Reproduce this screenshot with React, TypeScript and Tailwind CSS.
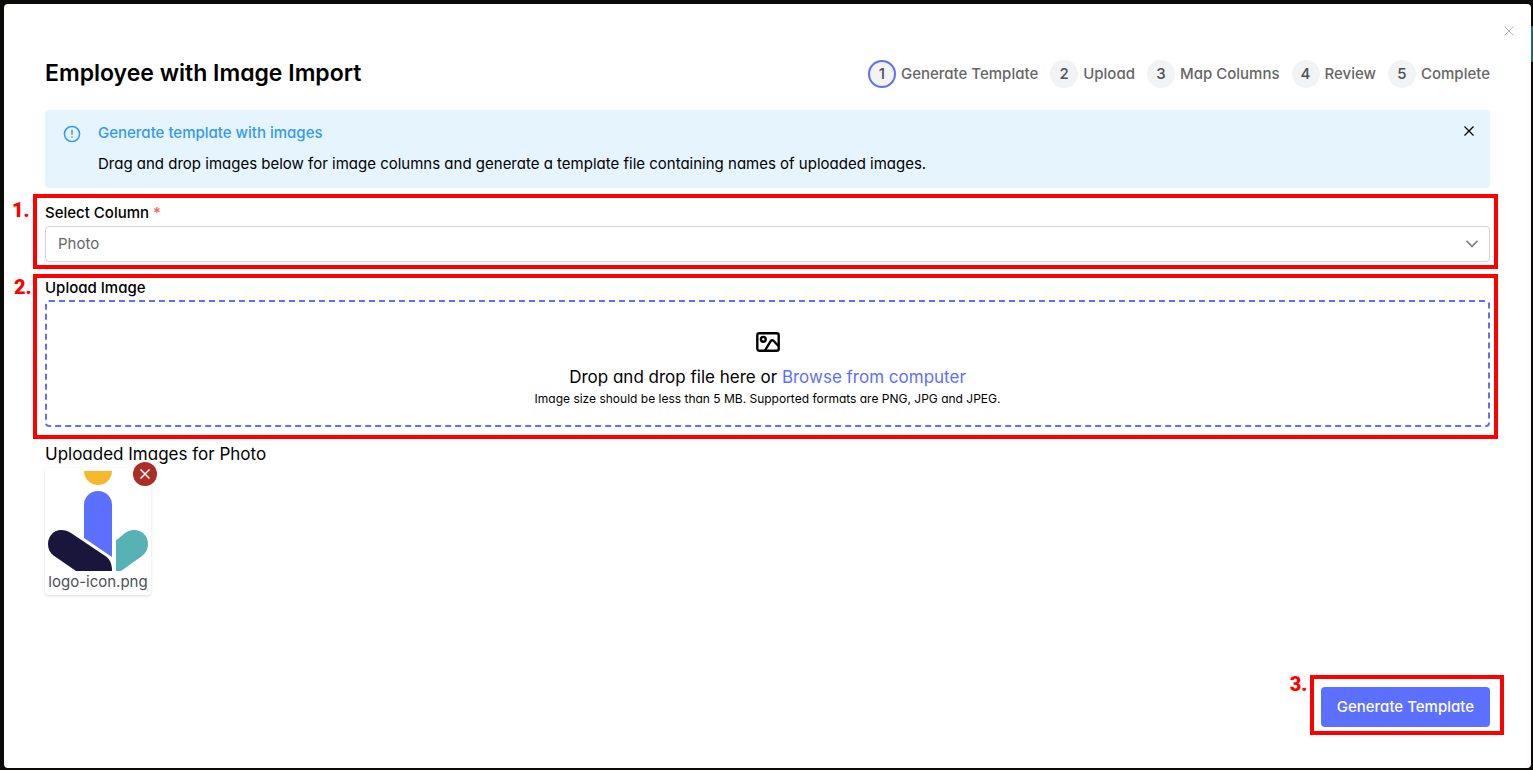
import { useState } from "react";

const steps = ["Generate Template", "Upload", "Map Columns", "Review", "Complete"];

function CrossIcon({ className }: { className: string }) {
  return (
    <svg viewBox="0 0 10 10" className={className} fill="none" stroke="currentColor" aria-hidden="true">
      <path d="M0.5 0.5 9.5 9.5M9.5 0.5 0.5 9.5" />
    </svg>
  );
}

function Stepper() {
  return (
    <ol className="flex items-center gap-3">
      {steps.map((label, i) => (
        <li key={label} className="flex items-center gap-[5px] text-[15px] font-medium text-[#666]">
          <span
            className={
              i === 0
                ? "flex size-7 items-center justify-center rounded-full border-2 border-[#5c6fff] bg-[#f1f3f5] text-[#495057]"
                : "flex size-7 items-center justify-center rounded-full bg-[#f1f3f5] text-[#495057]"
            }
          >
            {i + 1}
          </span>
          {label}
        </li>
      ))}
    </ol>
  );
}

function Marker({ children, className }: { children: string; className: string }) {
  return (
    <span
      className={`absolute font-['Roboto',sans-serif] text-[20px] leading-6 font-black text-[#f00] ${className}`}
    >
      {children}
    </span>
  );
}

function LogoPicture() {
  return (
    <svg viewBox="0 0 100 100" className="size-[100px]" role="img" aria-label="logo-icon.png">
      <path d="M36 0H64A14 14 0 0 1 36 0Z" fill="#f8b82e" />
      <path d="M36 34A14 14 0 0 1 64 34V86L36 67Z" fill="#5b70ff" />
      <path d="M13 59C17 59 20 60 23 62L58 85.500C62 88.500 64 93 64 100H28L5.500 84.500C2 82 0 78 0 73C0 65 6 59 13 59Z" fill="#19153b" />
      <path d="M68 69.500L77 62C80 60 83 59 86 59C94 59 100 65 100 73C100 78 98 82 94 85L73 100H68Z" fill="#56b2b5" />
    </svg>
  );
}

export default function App() {
  const [column, setColumn] = useState("Photo");
  return (
    <div className="relative flex min-h-screen flex-col bg-[#0b0a08] pt-1 pr-0.5 pb-0.5 pl-1 font-['Inter',sans-serif] text-black [font-feature-settings:'cv11']">
      <span className="absolute top-[26px] right-0 h-9 w-0.5 bg-[#256568]" />
      <main className="flex grow flex-col rounded-[4px] bg-white px-[41px] pb-[33px]">
        <div className="-mr-7 flex h-14 items-center justify-end pb-0.5">
          <button type="button" aria-label="Close dialog" className="p-1 text-[#adb5bd]">
            <CrossIcon className="size-2.5" />
          </button>
        </div>

        <header className="flex items-center justify-between">
          <h1 className="pb-0.5 text-[23px] leading-[26px] font-semibold">Employee with Image Import</h1>
          <Stepper />
        </header>

        <section className="mt-[22px] flex rounded-[4px] bg-[#e6f4fe] pt-3 pr-3 pb-[13px] pl-[18px]">
          <svg viewBox="0 0 18 18" className="mt-[3px] size-[18px] text-[#339af0]" fill="none" stroke="currentColor" strokeWidth="1.500" strokeLinecap="round" aria-hidden="true">
            <circle cx="9" cy="9" r="7.600" />
            <path d="M9 5.300V9.200M9 12V12.200" />
          </svg>
          <div className="ml-[17px] grow">
            <h2 className="text-[15px] leading-[22px] font-medium text-[#339af0]">Generate template with images</h2>
            <p className="mt-[9px] text-[15px] leading-[22px]">
              Drag and drop images below for image columns and generate a template file containing names of uploaded images.
            </p>
          </div>
          <button type="button" aria-label="Dismiss message" className="self-start p-1">
            <CrossIcon className="size-2.5 stroke-[1.3]" />
          </button>
        </section>

        <section className="relative mt-1.5 -mr-2 -ml-3 border-4 border-[#f00] pt-1 pr-1 pb-[3px] pl-2">
          <Marker className="top-0 -left-[25px]">1.</Marker>
          <label htmlFor="column" className="block h-6 text-[15px] leading-[22px] font-medium">
            Select Column <span className="text-[#f2635f]">*</span>
          </label>
          <div className="relative">
            <select
              id="column"
              value={column}
              onChange={(e) => setColumn(e.target.value)}
              className="h-9 w-full appearance-none rounded-[4px] border border-[#ced4da] bg-white px-3 text-[15px] text-[#666]"
            >
              <option>Photo</option>
            </select>
            <svg viewBox="0 0 12 8" className="pointer-events-none absolute top-[14px] right-3 h-2 w-3 text-[#868686]" fill="none" stroke="currentColor" strokeWidth="1.800" aria-hidden="true">
              <path d="M0.500 0.800 6 6.400 11.500 0.800" />
            </svg>
          </div>
        </section>

        <section className="relative mt-[5px] -mr-2 -ml-3 border-4 border-[#f00] pr-1 pb-2 pl-2">
          <Marker className="-top-[3px] -left-[23px]">2.</Marker>
          <h2 className="h-[22px] text-[15px] leading-5 font-medium">Upload Image</h2>
          <div className="flex flex-col items-center rounded-[4px] border-2 border-dashed border-[#5c70ff] pt-7 pb-[17px] text-center">
            <svg viewBox="0 0 24 24" className="size-6" fill="none" stroke="currentColor" strokeWidth="2.400" strokeLinejoin="round" aria-hidden="true">
              <rect x="1.300" y="3.300" width="21.400" height="17.400" rx="2" />
              <circle cx="7.300" cy="9.300" r="2.400" />
              <path d="M9 20.500 14.500 11.400Q16 9.200 17.700 11L22.500 16" />
            </svg>
            <p className="mt-[11px] text-[17px] leading-6">
              Drop and drop file here or{" "}
              <button type="button" className="text-[#5c70ff]">Browse from computer</button>
            </p>
            <p className="text-xs leading-[19px]">
              Image size should be less than 5 MB. Supported formats are PNG, JPG and JPEG.
            </p>
          </div>
        </section>

        <section className="mt-[3px]">
          <h2 className="text-[17px] leading-6">Uploaded Images for Photo</h2>
          <figure className="relative mt-0.5 w-fit rounded-[4px] p-[3px] shadow-[0_1px_3px_rgba(0,0,0,0.14)]">
            <LogoPicture />
            <figcaption className="text-center text-[15px] leading-[21px] text-[#495057]">logo-icon.png</figcaption>
            <button
              type="button"
              aria-label="Remove logo-icon.png"
              className="absolute -top-1.5 -right-1.5 flex size-6 items-center justify-center rounded-full bg-[#aa2e25] text-white"
            >
              <CrossIcon className="size-2.5 stroke-[1.5]" />
            </button>
          </figure>
        </section>

        <footer className="mt-auto flex justify-end">
          <div className="relative -mr-3.5 border-4 border-[#f00] pt-2 pr-2.5 pb-1 pl-[7px]">
            <Marker className="-top-[7px] -left-6">3.</Marker>
            <button type="button" className="h-10 rounded-[4px] bg-[#5c70ff] px-4 text-[15px] font-medium text-white">
              Generate Template
            </button>
          </div>
        </footer>
      </main>
    </div>
  );
}
